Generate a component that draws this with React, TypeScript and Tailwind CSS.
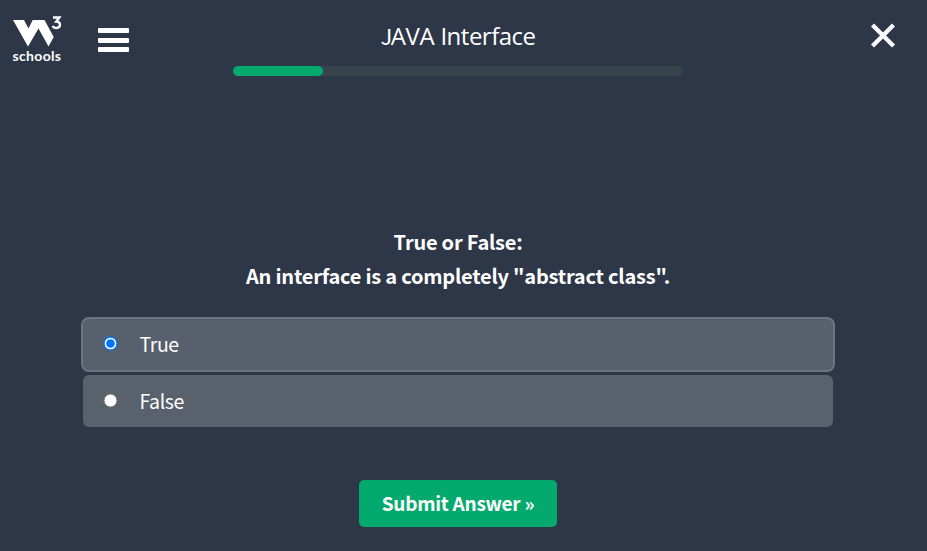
function Logo() {
  return (
    <svg width="52" height="50" viewBox="0 0 52 50" className="mt-[14px] shrink-0" fill="#fff">
      <path d="M1 6H12L16.5 14.5L20.7 6H32.5L41.7 23L36.5 32.5L26.5 14.5L16 32.5Z" />
      <path d="M41 3.5H47.4L44.2 7.7C47 7.7 48 9.3 48 10.8C48 12.8 46.4 14 44.3 14C42.4 14 41.2 13.2 40.7 11.8" fill="none" stroke="#fff" strokeWidth="2.3" />
      <text x="0.5" y="47" fontFamily="'Lato', sans-serif" fontWeight="700" fontSize="14" textLength="48.5">schools</text>
    </svg>
  );
}

function Radio({ checked }: { checked: boolean }) {
  return (
    <svg width="15" height="15" viewBox="0 0 15 15" className="mb-0.5 shrink-0">
      <circle cx="7.5" cy="7.5" r="6.5" fill="#fff" stroke={checked ? "#0075ff" : "#767676"} strokeWidth={checked ? 1.3 : 1} />
      {checked && <circle cx="7.5" cy="7.5" r="4.3" fill="#0075ff" />}
    </svg>
  );
}

function Option({ label, checked }: { label: string; checked: boolean }) {
  return (
    <label
      className={
        checked
          ? "flex h-[55px] items-center rounded-lg border-2 border-[#6b747f] bg-[#59606d] pl-5"
          : "mx-0.5 mt-[3px] flex h-[52px] items-center rounded-md bg-[#58616c] pl-5"
      }
    >
      <Radio checked={checked} />
      <span className="mb-px ml-[21.5px] font-['Noto_Sans_CJK_SC',sans-serif] text-[19.5px] leading-6 tracking-[-0.4px]">{label}</span>
    </label>
  );
}

export default function App() {
  return (
    <div className="flex h-[551px] w-[927px] flex-col overflow-hidden bg-[#2d3748] text-white">
      <header className="flex h-[76px] shrink-0 items-start">
        <div className="flex w-[233px] shrink-0 pl-3">
          <Logo />
          <div className="mt-7 ml-[34px] flex w-[31px] flex-col gap-[4.5px]">
            <span className="h-[5px] rounded-[1px] bg-white" />
            <span className="h-[5px] rounded-[1px] bg-white" />
            <span className="h-[5px] rounded-[1px] bg-white" />
          </div>
        </div>
        <div className="w-[450px] pt-5">
          <h1 className="h-[46px] text-center font-['Open_Sans',sans-serif] text-[24px] leading-8 whitespace-nowrap">
            <span className="font-['Noto_Sans_CJK_SC',sans-serif] text-[22px] leading-none tracking-[-1.5px]">J</span>
            <span className="tracking-[-0.3px]">AVA </span>
            <span className="tracking-[-0.5px]">Interface</span>
          </h1>
          <div className="h-[10px] rounded-full bg-[#38444d]">
            <div className="h-full w-1/5 rounded-full bg-[#04aa6d]" />
          </div>
        </div>
        <svg width="26" height="26" viewBox="0 0 26 26" className="mt-[22px] ml-[187px]">
          <path d="M2.5 3L23.5 24M23.5 3L2.5 24" stroke="#fff" strokeWidth="4.3" />
        </svg>
      </header>
      <main className="flex w-[916px] flex-col items-center pt-[149px]">
        <div className="text-center font-['Noto_Sans_CJK_SC',sans-serif] text-[20px] leading-[34px] font-bold tracking-[-0.22px] whitespace-nowrap">
          <p>True or False:</p>
          <p>An interface is a completely "abstract class".</p>
        </div>
        <div className="mt-[24px] w-[754px]">
          <Option label="True" checked />
          <Option label="False" checked={false} />
        </div>
        <button className="mt-[53px] h-[47px] w-[198px] rounded-[5px] bg-[#04aa6d] pb-0.5 font-['Noto_Sans_CJK_SC',sans-serif] text-[19px] leading-6 font-bold tracking-[-0.25px] whitespace-nowrap">
          Submit Answer »
        </button>
      </main>
    </div>
  );
}
